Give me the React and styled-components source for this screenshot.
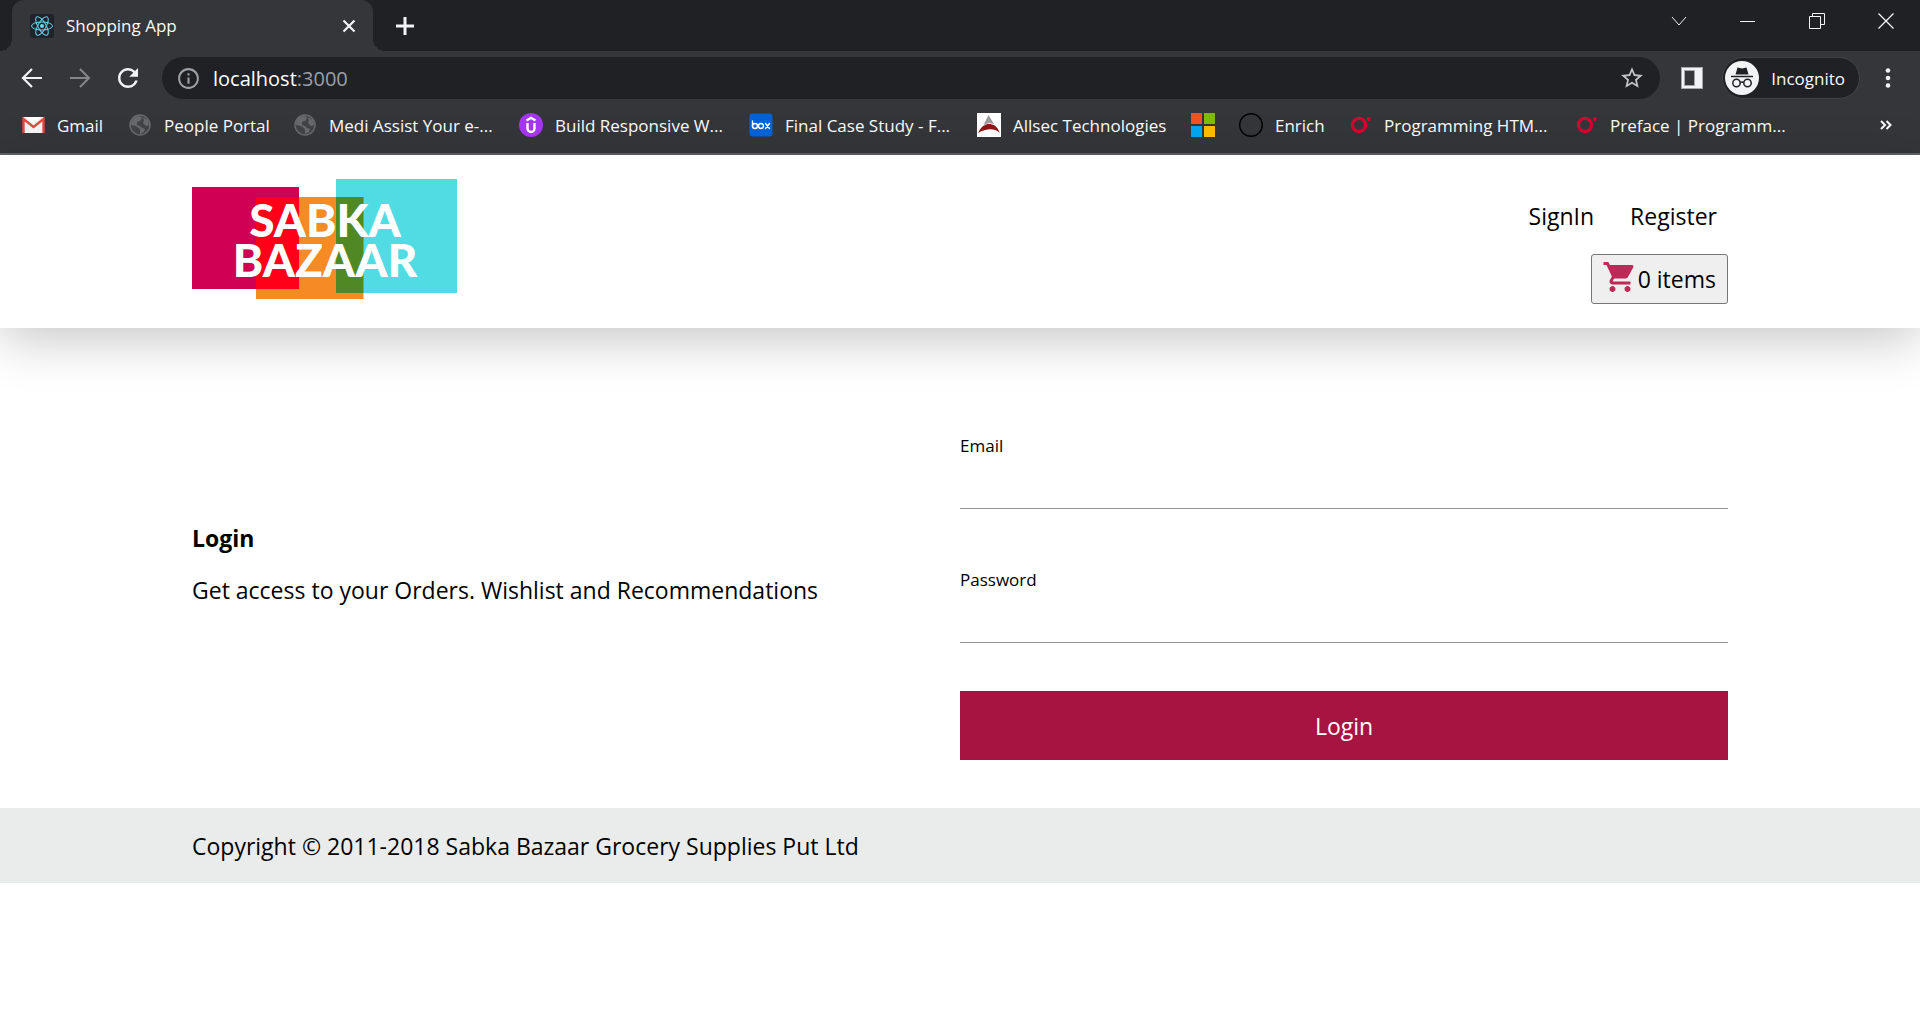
import React from "react";
import styled, { createGlobalStyle, css } from "styled-components";
import { MdShoppingCart, MdStarOutline, MdOutlineInfo, MdRefresh } from "react-icons/md";

const GlobalStyle = createGlobalStyle`
  * { box-sizing: border-box; }
  body {
    margin: 0;
    background: #fff;
    color: #000;
    font-family: "Segoe UI", "Open Sans", "Noto Sans", sans-serif;
    font-size: 23px;
  }
  button, input { font: inherit; color: inherit; }
  a { color: inherit; text-decoration: none; }
  h1, p { margin: 0; }
  svg { display: block; flex: none; }
`;

/* ---------- browser frame ---------- */

const Chrome = styled.div`
  background: #35363a;
  color: #f8f9fa;
  font-size: 17px;
  border-bottom: 2px solid #606165;
`;

const plainButton = css`
  display: flex;
  align-items: center;
  justify-content: center;
  padding: 0;
  border: 0;
  background: none;
`;

const IconButton = styled.button`
  ${plainButton}
  width: ${(p) => p.$width || 48}px;
  height: 42px;
  color: ${(p) => p.$color || "#f1f3f4"};
`;

const TabStrip = styled.div`
  display: flex;
  height: 51px;
  padding-left: 12px;
  background: #202124;
`;

const Tab = styled.div`
  position: relative;
  display: flex;
  align-items: center;
  width: 361px;
  padding: 0 8px 0 18px;
  border-radius: 12px 12px 0 0;
  background: #35363a;

  &::before,
  &::after {
    content: "";
    position: absolute;
    bottom: 0;
    width: 12px;
    height: 12px;
  }
  &::before {
    right: 100%;
    background: radial-gradient(circle at 0 0, transparent 12px, #35363a 12px);
  }
  &::after {
    left: 100%;
    background: radial-gradient(circle at 100% 0, transparent 12px, #35363a 12px);
  }
`;

const TabTitle = styled.span`
  flex: 1;
  margin-left: 12px;
`;

const NewTab = styled.div`
  display: flex;
  align-items: center;
  margin-left: 8px;
`;

const WindowControls = styled.div`
  display: flex;
  margin-left: auto;
`;

const Toolbar = styled.div`
  display: flex;
  align-items: center;
  height: 54px;
  padding: 0 8px;
`;

const AddressBar = styled.div`
  display: flex;
  flex: 1;
  align-items: center;
  height: 42px;
  margin: 0 8px 0 10px;
  padding: 0 4px 0 14px;
  border-radius: 21px;
  background: #202124;
`;

const Address = styled.span`
  flex: 1;
  margin-left: 12px;
  font-size: 20px;
  color: #fff;
`;

const Port = styled.span`
  color: #9aa0a6;
`;

const Incognito = styled.button`
  ${plainButton}
  gap: 12px;
  height: 42px;
  margin: 0 4px 0 6px;
  padding: 0 14px 0 2px;
  border: 1px solid #424347;
  border-radius: 21px;
  background: #202124;
`;

const Bookmarks = styled.nav`
  display: flex;
  align-items: center;
  height: 48px;
  padding: 0 20px 8px 21px;
`;

const Bookmark = styled.a`
  display: flex;
  align-items: center;
  gap: 12px;
  width: ${(p) => p.$width}px;
  white-space: nowrap;
`;

const Overflow = styled.button`
  ${plainButton}
  margin-left: auto;
  width: 28px;
`;

const ReactMark = () => (
  <svg width="24" height="24" viewBox="0 0 24 24">
    <rect width="24" height="24" rx="3" fill="#20232a" />
    <g fill="none" stroke="#61dafb">
      {[0, 60, 120].map((a) => (
        <ellipse key={a} cx="12" cy="12" rx="10.5" ry="4" transform={`rotate(${a} 12 12)`} />
      ))}
    </g>
    <circle cx="12" cy="12" r="2" fill="#61dafb" />
  </svg>
);

const Stroke = ({ size = 16, d, width = 1 }) => (
  <svg width={size} height={size} viewBox={`0 0 ${size} ${size}`} fill="none" stroke="currentColor" strokeWidth={width}>
    <path d={d} />
  </svg>
);

const GmailIcon = () => (
  <svg width="24" height="24" viewBox="0 0 24 24">
    <rect x="2" y="4" width="21" height="16" rx="1" fill="#f2f2f2" />
    <path d="M2.500 20V6l10 8 10-8v14" fill="none" stroke="#dd4b3e" strokeWidth="2.400" />
    <path d="M4.500 4h16l-8 6.500z" fill="#fff" />
  </svg>
);

const GlobeIcon = () => (
  <svg width="24" height="24" viewBox="0 0 24 24">
    <circle cx="12" cy="12" r="10" fill="#414246" stroke="#66686c" strokeWidth="1.500" />
    <path d="M3 12c0-6 4-9 9-9l2 2-2 3-3 1v3l3 1 2 2 3 1-1 3-4 2v-5l-4-3z M14 4l6 3 1 5-3 1-3-3 1-3z" fill="#66686c" />
  </svg>
);

const UdemyIcon = () => (
  <svg width="24" height="24" viewBox="0 0 24 24">
    <circle cx="12" cy="12" r="12" fill="#a435f0" />
    <path d="M7.500 7.500 12 4.800l4.500 2.700M8.500 10v5.500a3.500 3.500 0 0 0 7 0V10" fill="none" stroke="#fff" strokeWidth="2.400" />
  </svg>
);

const BoxIcon = () => (
  <svg width="24" height="24" viewBox="0 0 24 24" fill="none" stroke="#fff" strokeWidth="1.400" strokeLinecap="round">
    <rect x="0.500" y="0.500" width="23" height="23" rx="3" fill="#0061d5" stroke="none" />
    <path d="M3.500 8v5.500M16.500 10.500l4 5M20.500 10.500l-4 5" />
    <circle cx="6" cy="13" r="2.500" />
    <circle cx="12" cy="13" r="2.500" />
  </svg>
);

const AllsecIcon = () => (
  <svg width="24" height="24" viewBox="0 0 24 24">
    <rect width="24" height="24" fill="#fff" />
    <path d="M11.500 2 17 11l-5-1-5.500 2z" fill="#9a9a9a" />
    <path d="M1 20c4-8 9-10 14-8.500 4 1 6 4 8 8.500-4-4-12-6-22 0z" fill="#8b1414" />
  </svg>
);

const MicrosoftIcon = () => (
  <svg width="24" height="24" viewBox="0 0 24 24">
    <path fill="#f25022" d="M0 0h11v11H0z" />
    <path fill="#7fba00" d="M13 0h11v11H13z" />
    <path fill="#00a4ef" d="M0 13h11v11H0z" />
    <path fill="#ffb900" d="M13 13h11v11H13z" />
  </svg>
);

const EnrichIcon = () => (
  <svg width="24" height="24" viewBox="0 0 24 24">
    <circle cx="12" cy="12" r="11.300" fill="none" stroke="#000" strokeWidth="1.400" />
  </svg>
);

const OreillyIcon = () => (
  <svg width="24" height="24" viewBox="0 0 24 24">
    <circle cx="11" cy="12" r="6.600" fill="none" stroke="#d3002d" strokeWidth="3.200" />
    <circle cx="20.800" cy="6" r="2" fill="#d3002d" />
  </svg>
);

const SidePanelIcon = () => (
  <svg width="22" height="22" viewBox="0 0 22 22">
    <rect x="0.500" y="0.500" width="21" height="21" fill="#f1f3f4" stroke="#a5a6a9" />
    <rect x="3.500" y="3.500" width="10" height="15" fill="#35363a" stroke="#a5a6a9" />
  </svg>
);

const IncognitoIcon = () => (
  <svg width="34" height="34" viewBox="0 0 34 34">
    <circle cx="17" cy="17" r="17" fill="#f1f3f4" />
    <path d="M12.500 6.500 17 7.500l4.500-1 2 7h-13z" fill="#202124" />
    <path d="M6 15.500h22" stroke="#202124" strokeWidth="1.500" />
    <g fill="none" stroke="#202124" strokeWidth="1.500">
      <circle cx="11.500" cy="22" r="3.700" />
      <circle cx="22.500" cy="22" r="3.700" />
      <path d="M15.200 21.500q1.800-1 3.600 0" />
    </g>
  </svg>
);

const DotsIcon = () => (
  <svg width="24" height="24" viewBox="0 0 24 24" fill="currentColor">
    <circle cx="12" cy="4.500" r="2.300" />
    <circle cx="12" cy="12" r="2.300" />
    <circle cx="12" cy="19.500" r="2.300" />
  </svg>
);

const bookmarks = [
  { label: "Gmail", icon: GmailIcon, width: 107 },
  { label: "People Portal", icon: GlobeIcon, width: 165 },
  { label: "Medi Assist Your e-...", icon: GlobeIcon, width: 226 },
  { label: "Build Responsive W...", icon: UdemyIcon, width: 230 },
  { label: "Final Case Study - F...", icon: BoxIcon, width: 228 },
  { label: "Allsec Technologies", icon: AllsecIcon, width: 214 },
  { label: "", name: "Microsoft", icon: MicrosoftIcon, width: 48 },
  { label: "Enrich", icon: EnrichIcon, width: 109 },
  { label: "Programming HTM...", icon: OreillyIcon, width: 226 },
  { label: "Preface | Programm...", icon: OreillyIcon, width: 226 },
];

function BrowserFrame() {
  return (
    <Chrome>
      <TabStrip>
        <Tab>
          <ReactMark />
          <TabTitle>Shopping App</TabTitle>
          <IconButton $width={32} aria-label="Close tab">
            <Stroke d="M2.500 2.500l11 11M13.500 2.500l-11 11" width={2.2} />
          </IconButton>
        </Tab>
        <NewTab>
          <IconButton aria-label="New tab">
            <Stroke size={20} d="M10 1v18M1 10h18" width={3} />
          </IconButton>
        </NewTab>
        <WindowControls>
          <IconButton $width={68} aria-label="Search tabs"><Stroke d="M1 4l7 8 7-8" /></IconButton>
          <IconButton $width={69} aria-label="Minimize"><Stroke d="M0 8.500h15" /></IconButton>
          <IconButton $width={69} aria-label="Restore"><Stroke d="M.5 3.500h11v12h-11zM3.500 3.500v-3h12v11h-4" /></IconButton>
          <IconButton $width={69} aria-label="Close window"><Stroke d="M.5.5l15 15M15.500.5l-15 15" width={1.3} /></IconButton>
        </WindowControls>
      </TabStrip>
      <Toolbar>
        <IconButton aria-label="Back"><Stroke size={22} d="M21 11H2M11 2l-9 9 9 9" width={2.2} /></IconButton>
        <IconButton aria-label="Forward" $color="#85868a"><Stroke size={22} d="M1 11h19M11 2l9 9-9 9" width={2} /></IconButton>
        <IconButton aria-label="Reload"><MdRefresh size={30} /></IconButton>
        <AddressBar>
          <MdOutlineInfo size={25} color="#9aa0a6" />
          <Address>localhost<Port>:3000</Port></Address>
          <IconButton aria-label="Bookmark this page" $color="#c4c5c7"><MdStarOutline size={26} /></IconButton>
        </AddressBar>
        <IconButton aria-label="Side panel"><SidePanelIcon /></IconButton>
        <Incognito><IncognitoIcon />Incognito</Incognito>
        <IconButton aria-label="Menu"><DotsIcon /></IconButton>
      </Toolbar>
      <Bookmarks aria-label="Bookmarks">
        {bookmarks.map(({ label, name, icon: Icon, width }, i) => (
          <Bookmark key={i} href="#" $width={width} aria-label={name}>
            <Icon />
            {label}
          </Bookmark>
        ))}
        <Overflow aria-label="More bookmarks">
          <Stroke size={12} d="M1 2l4 4-4 4M6.500 2l4 4-4 4" width={2} />
        </Overflow>
      </Bookmarks>
    </Chrome>
  );
}

/* ---------- shop page ---------- */

const Header = styled.header`
  display: flex;
  align-items: flex-start;
  justify-content: space-between;
  padding: 24px 10%;
  box-shadow: 0 12px 48px rgba(0, 0, 0, 0.22);
`;

const Account = styled.div`
  display: flex;
  flex-direction: column;
  align-items: flex-end;
  gap: 22px;
  padding-top: 21px;
`;

const AccountLinks = styled.nav`
  display: flex;
  gap: 36px;
  padding-right: 11px;
  line-height: 32px;
`;

const CartButton = styled.button`
  display: flex;
  align-items: center;
  height: 50px;
  padding: 0 11px 0 10px;
  border: 1px solid #767676;
  border-radius: 3px;
  background: #efefef;
`;

const CartIcon = styled(MdShoppingCart)`
  margin-bottom: 4px;
  color: #bf2957;
`;

const Main = styled.main`
  display: grid;
  grid-template-columns: 1fr 1fr;
  align-items: center;
  padding: 103px 10% 48px;
`;

const Intro = styled.section`
  display: grid;
  gap: 20px;
  padding-bottom: 64px;
  line-height: 32px;
`;

const Title = styled.h1`
  font-size: 23px;
  font-weight: 700;
`;

const Form = styled.form`
  display: grid;
  gap: 48px;
`;

const Fields = styled.div`
  display: grid;
  gap: 56px;
`;

const Field = styled.div`
  display: grid;
`;

const Label = styled.label`
  font-size: 17px;
  line-height: 30px;
`;

const Input = styled.input`
  height: 48px;
  padding: 0;
  border: 0;
  border-bottom: 1px solid #949494;
  border-radius: 0;
  background: none;
  outline: none;
`;

const Submit = styled.button`
  height: 69px;
  border: 0;
  background: #a71442;
  color: #fff;
`;

const Footer = styled.footer`
  padding: 22px 10% 21px;
  background: #eaeceb;
  line-height: 32px;
`;

const LogoText = styled.text`
  font-family: Lato, "Open Sans", sans-serif;
  font-size: 46px;
  font-weight: 900;
  fill: #fff;
  text-anchor: middle;
`;

const Logo = () => (
  <svg width="265" height="120" viewBox="0 0 265 120" role="img" aria-label="Sabka Bazaar">
    <path fill="#d00054" d="M0 8h107v102H0z" />
    <path fill="#f68a24" d="M64 18h107.500v102H64z" />
    <path fill="#51dce3" d="M144 0h121v114H144z" />
    <path fill="#ff0018" d="M64 18h43v92H64z" />
    <path fill="#508824" d="M144 18h27.500v96H144z" />
    <LogoText>
      <tspan x="133" y="58">SABKA</tspan>
      <tspan x="133" y="98">BAZAAR</tspan>
    </LogoText>
  </svg>
);

export default function App() {
  return (
    <>
      <GlobalStyle />
      <BrowserFrame />
      <Header>
        <a href="#"><Logo /></a>
        <Account>
          <AccountLinks aria-label="Account">
            <a href="#">SignIn</a>
            <a href="#">Register</a>
          </AccountLinks>
          <CartButton><CartIcon size={36} />0 items</CartButton>
        </Account>
      </Header>
      <Main>
        <Intro>
          <Title>Login</Title>
          <p>Get access to your Orders. Wishlist and Recommendations</p>
        </Intro>
        <Form>
          <Fields>
            <Field>
              <Label htmlFor="email">Email</Label>
              <Input id="email" type="email" />
            </Field>
            <Field>
              <Label htmlFor="password">Password</Label>
              <Input id="password" type="password" />
            </Field>
          </Fields>
          <Submit type="button">Login</Submit>
        </Form>
      </Main>
      <Footer>Copyright © 2011-2018 Sabka Bazaar Grocery Supplies Put Ltd</Footer>
    </>
  );
}
